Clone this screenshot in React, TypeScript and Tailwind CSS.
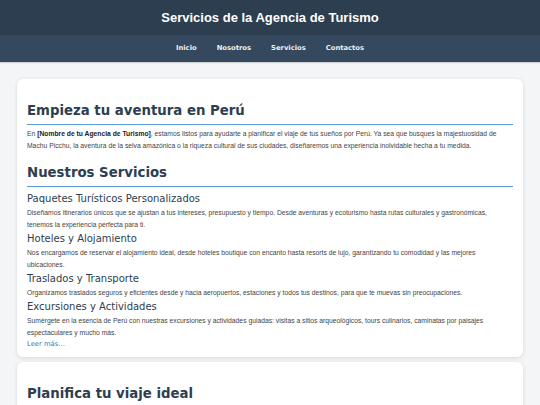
import React from "react";

const dv = "font-['DejaVu_Sans',Verdana,sans-serif]";
const ar = "font-['Liberation_Sans',Arial,sans-serif]";

function Service({ title, children }: { title: string; children: React.ReactNode }) {
  return (
    <>
      <h3 className={`${dv} text-[10px] leading-[12px] text-[#2c3e50] mt-[2.5px] font-normal`}>{title}</h3>
      <p className={`${ar} text-[6.75px] leading-[12px] text-[#444] mt-[1.5px] whitespace-nowrap`}>{children}</p>
    </>
  );
}

export default function App() {
  return (
    <div className="min-h-[405px] bg-[#f4f5f7]">
      <header className="bg-[#2c3e50] h-[35px] flex items-center justify-center">
        <h1 className={`${ar} text-[13px] font-bold text-white leading-none`}>
          Servicios de la Agencia de Turismo
        </h1>
      </header>
      <nav className="bg-[#34495e] h-[27px] flex items-center justify-center gap-[20px] shadow-[0_1px_1px_rgba(0,0,0,0.15)]">
        {["Inicio", "Nosotros", "Servicios", "Contactos"].map((t) => (
          <a key={t} className={`${dv} text-[6.8px] font-bold text-[#ecf0f1]`}>
            {t}
          </a>
        ))}
      </nav>
      <main className="px-[17px] pt-[17px] flex flex-col gap-[5px]">
        <section className="bg-white rounded-[6px] shadow-[0_1px_4px_rgba(0,0,0,0.12)] px-[10px] pt-[10px] pb-[8px]">
          <h2 className={`${dv} text-[13.3px] leading-[16px] font-bold text-[#2c3e50] mt-[14px] pb-[5px] border-b-[1.5px] border-[#5b9dd3]`}>
            Empieza tu aventura en Perú
          </h2>
          <p className={`${ar} text-[6.75px] leading-[12px] text-[#444] mt-[3px] whitespace-nowrap`}>
            En <strong className="text-[#222]">[Nombre de tu Agencia de Turismo]</strong>, estamos listos para ayudarte a
            planificar el viaje de tus sueños por Perú. Ya sea que busques la majestuosidad de
            <br />
            Machu Picchu, la aventura de la selva amazónica o la riqueza cultural de sus ciudades, diseñaremos una
            experiencia inolvidable hecha a tu medida.
          </p>
          <h2 className={`${dv} text-[13.3px] leading-[16px] font-bold text-[#2c3e50] mt-[13px] pb-[5px] border-b-[1.5px] border-[#5b9dd3] mb-[6px]`}>
            Nuestros Servicios
          </h2>
          <Service title="Paquetes Turísticos Personalizados">
            Diseñamos itinerarios únicos que se ajustan a tus intereses, presupuesto y tiempo. Desde aventuras y
            ecoturismo hasta rutas culturales y gastronómicas,
            <br />
            tenemos la experiencia perfecta para ti.
          </Service>
          <Service title="Hoteles y Alojamiento">
            Nos encargamos de reservar el alojamiento ideal, desde hoteles boutique con encanto hasta resorts de lujo,
            garantizando tu comodidad y las mejores
            <br />
            ubicaciones.
          </Service>
          <Service title="Traslados y Transporte">
            Organizamos traslados seguros y eficientes desde y hacia aeropuertos, estaciones y todos tus destinos, para
            que te muevas sin preocupaciones.
          </Service>
          <Service title="Excursiones y Actividades">
            Sumérgete en la esencia de Perú con nuestras excursiones y actividades guiadas: visitas a sitios
            arqueológicos, tours culinarios, caminatas por paisajes
            <br />
            espectaculares y mucho más.
          </Service>
          <a className={`${dv} block text-[6.8px] leading-[10px] text-[#2980b9]`}>Leer más...</a>
        </section>
        <section className="bg-white rounded-[6px] shadow-[0_1px_4px_rgba(0,0,0,0.12)] px-[10px] pt-[10px] pb-[10px]">
          <h2 className={`${dv} text-[13.3px] leading-[16px] font-bold text-[#2c3e50] mt-[14px] pb-[5px] border-b-[1.5px] border-[#5b9dd3]`}>
            Planifica tu viaje ideal
          </h2>
          <p className={`${ar} text-[6.75px] leading-[12px] text-[#444] mt-[2px]`}>
            Cuéntanos tus preferencias y crearemos un itinerario a tu medida.
          </p>
        </section>
      </main>
    </div>
  );
}
